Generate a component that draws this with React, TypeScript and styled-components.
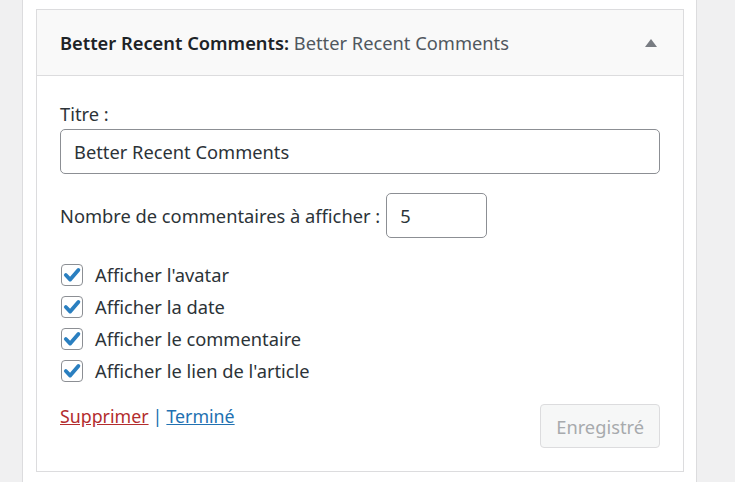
import React from "react";
import styled, { createGlobalStyle } from "styled-components";

const font = `"Noto Sans", "Open Sans", sans-serif`;
const size = "18.3px";

const GlobalStyle = createGlobalStyle`
  body {
    margin: 0;
    background: #f0f0f1;
    font-family: ${font};
    color: #2c3338;
  }
`;

const Page = styled.div`
  display: flex;
  height: 482px;
  overflow: hidden;
`;

const Strip = styled.div`
  width: 22px;
  background: #f0f0f1;
  border-right: 1px solid #dcdcde;
`;

const Column = styled.div`
  width: 660px;
  background: #fff;
  border-right: 1px solid #dcdcde;
  padding: 9px 0 0 13px;
`;

const Widget = styled.div`
  width: 646px;
  border: 1px solid #dcdcde;
  background: #fff;
`;

const Header = styled.div`
  height: 65px;
  background: #f9f9f9;
  border-bottom: 1px solid #dcdcde;
  display: flex;
  align-items: center;
  justify-content: space-between;
  padding: 0 26px 0 23px;
`;

const Title = styled.h3`
  margin: 0;
  font-size: ${size};
  font-weight: 600;
  color: #1d2327;
`;

const Sub = styled.span`
  font-weight: 400;
  color: #50575e;
`;

const Arrow = styled.span`
  width: 0;
  height: 0;
  border-left: 6px solid transparent;
  border-right: 6px solid transparent;
  border-bottom: 8px solid #787c82;
`;

const Body = styled.div`
  padding: 26px 23px 23px;
  display: flex;
  flex-direction: column;
  font-size: ${size};
`;

const Label = styled.label`
  display: block;
  line-height: 24px;
  color: #2c3338;
`;

const TextInput = styled.input<{ $w?: string }>`
  box-sizing: border-box;
  width: ${(p) => p.$w || "100%"};
  height: 45px;
  margin: 0;
  padding: 0 13px;
  border: 1px solid #8c8f94;
  border-radius: 5px;
  font-family: ${font};
  font-size: ${size};
  color: #2c3338;
  background: #fff;
  outline: none;
`;

const Field = styled.div`
  display: flex;
  flex-direction: column;
  gap: 3px;
`;

const InlineField = styled.div`
  display: flex;
  align-items: center;
  gap: 6px;
  margin-top: 19px;
`;

const Checks = styled.div`
  display: flex;
  flex-direction: column;
  margin-top: 26px;
`;

const CheckRow = styled.label`
  display: flex;
  align-items: flex-start;
  gap: 12px;
  height: 32px;
  line-height: 22px;
`;

const Box = styled.span`
  box-sizing: border-box;
  width: 22px;
  height: 22px;
  border: 1px solid #8c8f94;
  border-radius: 4px;
  display: flex;
  align-items: center;
  justify-content: center;
  background: #fff;
  margin-left: 1px;
`;

const Footer = styled.div`
  display: flex;
  justify-content: space-between;
  align-items: flex-start;
  margin-top: 12px;
  height: 44px;
`;

const Links = styled.div`
  line-height: 24px;
  font-size: 17.8px;
  color: #2271b1;
`;

const Sep = styled.span`
  margin: 0 4px;
`;

const Link = styled.a<{ $danger?: boolean }>`
  color: ${(p) => (p.$danger ? "#b32d2e" : "#2271b1")};
  text-decoration: underline;
  cursor: pointer;
`;

const Button = styled.button`
  box-sizing: border-box;
  height: 44px;
  padding: 0 15px;
  border: 1px solid #dcdcde;
  border-radius: 4px;
  background: #f6f7f7;
  color: #a7aaad;
  font-family: ${font};
  font-size: ${size};
`;

const Check = () => (
  <Box>
    <svg width="20" height="20" viewBox="0 0 20 20">
      <path
        d="M3.8 10 L8.2 14.6 L16.4 5"
        fill="none"
        stroke="#2a7fc0"
        strokeWidth="3.8"
        strokeLinecap="round"
        strokeLinejoin="round"
      />
    </svg>
  </Box>
);

const options = [
  "Afficher l'avatar",
  "Afficher la date",
  "Afficher le commentaire",
  "Afficher le lien de l'article",
];

export default function App() {
  return (
    <>
      <GlobalStyle />
      <Page>
        <Strip />
        <Column>
          <Widget>
            <Header>
              <Title>
                Better Recent Comments: <Sub>Better Recent Comments</Sub>
              </Title>
              <Arrow />
            </Header>
            <Body>
              <Field>
                <Label>Titre :</Label>
                <TextInput defaultValue="Better Recent Comments" />
              </Field>
              <InlineField>
                <Label>Nombre de commentaires à afficher :</Label>
                <TextInput $w="101px" defaultValue="5" />
              </InlineField>
              <Checks>
                {options.map((o) => (
                  <CheckRow key={o}>
                    <Check />
                    {o}
                  </CheckRow>
                ))}
              </Checks>
              <Footer>
                <Links>
                  <Link $danger>Supprimer</Link>
                  <Sep>|</Sep>
                  <Link>Terminé</Link>
                </Links>
                <Button disabled>Enregistré</Button>
              </Footer>
            </Body>
          </Widget>
        </Column>
      </Page>
    </>
  );
}
